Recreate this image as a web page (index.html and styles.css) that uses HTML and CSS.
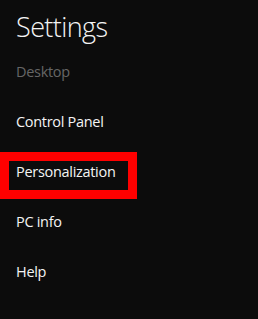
FILE: index.html
```html
<!DOCTYPE html>
<html lang="en">
<head>
    <meta charset="UTF-8">
    <title>Settings</title>
    <link rel="stylesheet" href="styles.css">
</head>
<body>
    <div class="settings-panel">
        <h1 class="settings-title">Settings</h1>
        <ul class="settings-list">
            <li class="settings-item disabled">Desktop</li>
            <li class="settings-item">Control Panel</li>
            <li class="settings-item marked">Personalization</li>
            <li class="settings-item">PC info</li>
            <li class="settings-item">Help</li>
        </ul>
    </div>
</body>
</html>
```

FILE: styles.css
```css
html, body {
    margin: 0;
    padding: 0;
    height: 100%;
    background-color: #0c0c0c;
}

.settings-panel {
    display: flex;
    flex-direction: column;
    font-family: "Open Sans", "Noto Sans", sans-serif;
    color: #f4f4f4;
}

.settings-title {
    margin: 0;
    padding: 3px 0 0 16px;
    height: 44px;
    line-height: 47px;
    font-size: 27px;
    font-weight: 300;
    letter-spacing: -0.6px;
}

.settings-list {
    list-style: none;
    margin: 0;
    padding: 0;
}

.settings-item {
    position: relative;
    height: 50px;
    line-height: 50px;
    padding-left: 16px;
    font-size: 14.5px;
    letter-spacing: -0.3px;
}

.settings-item.disabled {
    color: #666666;
}

/* recuadro rojo encima del elemento */
.settings-item.marked::after {
    content: "";
    position: absolute;
    left: 0;
    top: 5px;
    width: 119px;
    height: 29px;
    border: 9px solid #ff0000;
}
```
